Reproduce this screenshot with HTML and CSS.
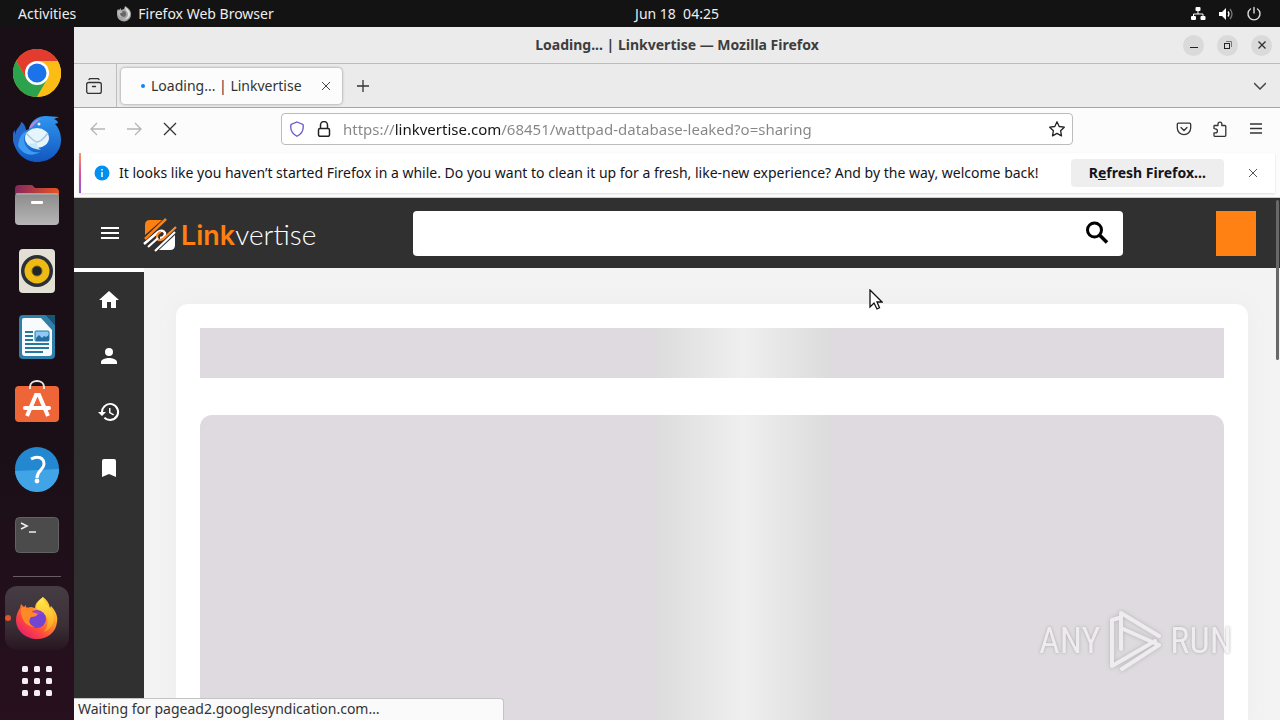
FILE: index.html
```html
<!DOCTYPE html>
<html lang="en">
<head>
<meta charset="utf-8">
<meta name="viewport" content="width=device-width, initial-scale=1">
<title>Loading... | Linkvertise</title>
<link rel="stylesheet" href="styles.css">
</head>
<body>
<div class="desktop">
  <header class="topbar">
    <div class="topbar-left">
      <button class="top-btn activities">Activities</button>
      <button class="top-btn app-menu">
        <svg width="16" height="16" viewBox="0 0 16 16"><path d="M1 5l1-2 1 1 2-2v2l3-1 1-3c3 2 6 4 6 8a7 7 0 0 1-14 1z" fill="#a5a5a5"/><path d="M9 1c3 2 5 4 5 7 0 4-4 6-7 5 3 0 5-2 5-5 0-2-3-4-3-7z" fill="#e4e4e4"/><circle cx="7" cy="8" r="3" fill="#666"/><path d="M2 5c2-1 3 0 5 1-1 1-2 1-3 1 0 3 2 4 4 4-4 1-6-2-6-6z" fill="#bbb"/></svg>
        <span>Firefox Web Browser</span>
      </button>
    </div>
    <button class="top-btn clock">Jun 18&nbsp; 04:25</button>
    <button class="top-btn tray" aria-label="System menu">
      <svg width="16" height="16" viewBox="0 0 16 16" fill="#fff"><rect x="5.500" y="1" width="5" height="4" rx="1"/><rect x="1" y="10" width="5" height="4" rx="1"/><rect x="10.500" y="10" width="5" height="4" rx="1"/><path d="M8 4v4M3.500 10V8h9.500v2" fill="none" stroke="#fff"/></svg>
      <svg width="16" height="16" viewBox="0 0 16 16"><path d="M1 6h3l4-4v12l-4-4H1z" fill="#fff"/><path d="M10 5.500q2 2.500 0 5" fill="none" stroke="#fff" stroke-width="1.300"/><path d="M12 3q4 5 0 10" fill="none" stroke="#777" stroke-width="1.300"/></svg>
      <svg width="16" height="16" viewBox="0 0 16 16" fill="none" stroke="#ddd" stroke-width="1.400" stroke-linecap="round"><path d="M8 1.500v5.500M4.500 3a6 6 0 1 0 7 0"/></svg>
    </button>
  </header>

  <nav class="dock" aria-label="Applications">
    <button class="dock-item" aria-label="Chrome">
      <svg width="48" height="48" viewBox="0 0 48 48"><circle cx="24" cy="24" r="24" fill="#fbbc15"/><path d="M3.200 12A24 24 0 0 1 44.800 12H24L13.600 30z" fill="#e33b2e"/><path d="M3.200 12A24 24 0 0 0 24 48L34.400 30 24 24 13.600 30z" fill="#2ba24c"/><path d="M24 12h20.800A24 24 0 0 1 24 48l10.400-18z" fill="#fbbc15"/><circle cx="24" cy="24" r="12" fill="#fff"/><circle cx="24" cy="24" r="9.500" fill="#1a73e8"/></svg>
    </button>
    <button class="dock-item" aria-label="Thunderbird">
      <svg width="48" height="48" viewBox="0 0 48 48"><defs><linearGradient id="tb" x2="0" y2="1"><stop stop-color="#2f96ee"/><stop offset="1" stop-color="#1257c0"/></linearGradient></defs><path d="M8 7c3 1 5 5 5 9L8 25 4 35C-2 26-1 18 2 15v5C3 13 8 11 8 7z" fill="#2568c9"/><path d="M16 14C18 5 25 1 33 1l13 1-5 2c3 1 4 3 4 4l-3 1c4 4 6 10 6 16 0 13-11 22-24 22C12 47 2 38 1 26c2 4 4 5 5 5-1-9 3-15 10-17z" fill="url(#tb)"/><path d="M16 14c2-7 7-10 13-10-6 2-7 6-11 9z" fill="#b488db"/><path d="M5 31c1-9 4-13 9-14-4 4-4 9-1 14 4 6 9 7 14 6-10 6-18 1-22-6z" fill="#3d9cf2"/><ellipse cx="24" cy="23" rx="12" ry="10" fill="#e6f4fc"/><path d="M13 18c4 4 8 9 11 9s8-5 11-9" fill="none" stroke="#a6c9db" stroke-width="1.500"/><path d="M14 29c4 4 8 5 14 6-4-3-4-5-4-7z" fill="#c7e7fb"/><circle cx="26" cy="9" r="1.500" fill="#e6f4fc"/></svg>
    </button>
    <button class="dock-item" aria-label="Files">
      <svg width="48" height="48" viewBox="0 0 48 48"><defs><linearGradient id="fb"><stop stop-color="#85275f"/><stop offset="1" stop-color="#e95420"/></linearGradient><linearGradient id="ff" x2="0" y2="1"><stop stop-color="#8b8b8b"/><stop offset="1" stop-color="#b6b6b6"/></linearGradient></defs><path d="M2 18V8q0-4 4-4h12q2 0 3 2l1 1h20q4 0 4 4v8z" fill="url(#fb)"/><rect x="2" y="12" width="44" height="32" rx="4" fill="url(#ff)"/><path d="M3 13h42" stroke="#b8b8b8"/><rect x="18" y="20" width="12" height="3" rx="1" fill="#fff"/></svg>
    </button>
    <button class="dock-item" aria-label="Rhythmbox">
      <svg width="48" height="48" viewBox="0 0 48 48"><rect x="6" y="2" width="36" height="44" rx="4" fill="#e2dfd4"/><circle cx="24" cy="24" r="16" fill="#2b3037"/><circle cx="24" cy="24" r="12.500" fill="#edbb14"/><circle cx="24" cy="24" r="5" fill="#20242e" stroke="#776017"/></svg>
    </button>
    <button class="dock-item" aria-label="LibreOffice Writer">
      <svg width="48" height="48" viewBox="0 0 48 48"><path d="M10 2h23l9 10v30q0 4-4 4H10q-4 0-4-4V6q0-4 4-4z" fill="#307fa8"/><path d="M33 2h9v10z" fill="#165778"/><path d="M11 5h17l11 12v23q0 3-3 3H12q-3 0-3-3V7q0-2 2-2z" fill="#f7fbfe"/><path d="M12 19h8M12 23h8M12 27h8M12 31h24M12 35h24M12 39h18" stroke="#28789e" stroke-width="2"/><rect x="22" y="18" width="14" height="10" rx="1" fill="#8fc9f4" stroke="#28789e"/><path d="M23 28v-3l3-3 3 3 2-2 2 1 3-2v6z" fill="#246fa1"/></svg>
    </button>
    <button class="dock-item" aria-label="Software">
      <svg width="48" height="48" viewBox="0 0 48 48"><rect x="2" y="7" width="44" height="36" rx="4" fill="#ee6637"/><path d="M17 10V8c0-8 14-8 14 0v2" fill="none" stroke="#eee6dc" stroke-width="2"/><path d="M14 37l9-21h3l9 21" fill="none" stroke="#fff" stroke-width="4"/><rect x="10" y="27" width="28" height="4" rx="2" fill="#fff"/></svg>
    </button>
    <button class="dock-item" aria-label="Help">
      <svg width="48" height="48" viewBox="0 0 48 48"><circle cx="24" cy="24" r="22" fill="#2488d1"/><path d="M2 26a22 22 0 0 0 44-2z" fill="#40a4e7"/><path d="M18 14c7-4 13-1 13 5 0 6-7 6-7 14" fill="none" stroke="#fff" stroke-width="3"/><circle cx="24" cy="36" r="2.400" fill="#fff"/></svg>
    </button>
    <button class="dock-item" aria-label="Terminal">
      <svg width="48" height="48" viewBox="0 0 48 48"><rect x="2.500" y="6.500" width="43" height="35" rx="4" fill="#4b4b4b" stroke="#626262"/><path d="M8 12l6 3-6 3M16 21h7" fill="none" stroke="#eee" stroke-width="1.600"/></svg>
    </button>
    <hr class="dock-rule">
    <button class="dock-item dock-active" aria-label="Firefox">
      <svg width="44" height="44" viewBox="0 0 44 44"><defs><linearGradient id="fx" x1="1" y1="0" x2="0.200" y2="1"><stop stop-color="#fff44f"/><stop offset="0.400" stop-color="#ff9b29"/><stop offset="0.700" stop-color="#ff4b3d"/><stop offset="1" stop-color="#e51b6e"/></linearGradient><linearGradient id="fy" x2="0" y2="1"><stop stop-color="#fff04a"/><stop offset="1" stop-color="#ff9b1f"/></linearGradient></defs><path d="M28 1c4 3 6 6 7 11l1-2c5 5 7 11 6 16-1 10-9 17-20 17S1 35 1 24c0-5 2-9 4-12l1-4 3 3 2-2v3l5-1 4 1c0-5 4-8 8-11z" fill="url(#fx)"/><path d="M28 1c0 7 11 11 11 21 0 7-5 12-10 14 7-9 3-19-4-20l-4-4c0-5 4-8 7-11z" fill="url(#fy)"/><circle cx="22" cy="23" r="9" fill="#7444d2"/><path d="M14 18c5-5 11-3 14 0-4-1-7 1-9 3z" fill="#b33ace"/><path d="M6 12c5-2 9 0 11 4l6 2c-1 2-4 3-7 3-4 5 0 9 4 10-9 0-15-8-14-19z" fill="#ff8a25"/></svg>
    </button>
    <button class="dock-item dock-apps" aria-label="Show Applications">
      <svg width="30" height="30" viewBox="0 0 30 30" fill="#f6eef4"><rect width="6" height="6" rx="1.500"/><rect x="12" width="6" height="6" rx="1.500"/><rect x="24" width="6" height="6" rx="1.500"/><rect y="12" width="6" height="6" rx="1.500"/><rect x="12" y="12" width="6" height="6" rx="1.500"/><rect x="24" y="12" width="6" height="6" rx="1.500"/><rect y="24" width="6" height="6" rx="1.500"/><rect x="12" y="24" width="6" height="6" rx="1.500"/><rect x="24" y="24" width="6" height="6" rx="1.500"/></svg>
    </button>
  </nav>

  <section class="window">
    <div class="titlebar">
      <span class="window-title">Loading... | Linkvertise — Mozilla Firefox</span>
      <div class="window-controls">
        <button class="round-btn" aria-label="Minimize"><svg width="10" height="10" viewBox="0 0 10 10"><path d="M1 7.500h8" stroke="#222"/></svg></button>
        <button class="round-btn" aria-label="Restore"><svg width="10" height="10" viewBox="0 0 10 10" fill="none" stroke="#222"><rect x="1.500" y="3.500" width="5" height="5"/><path d="M3 1.500h5.500V7" stroke="#777"/></svg></button>
        <button class="round-btn" aria-label="Close"><svg width="10" height="10" viewBox="0 0 10 10"><path d="M1.500 1.500l7 7M8.500 1.500l-7 7" stroke="#333" stroke-width="1.400"/></svg></button>
      </div>
    </div>

    <div class="tabbar">
      <button class="view-btn" aria-label="Firefox View"><svg width="16" height="16" viewBox="0 0 16 16" fill="none" stroke="#333" stroke-width="1.300" stroke-linecap="round"><rect x=".7" y="4.500" width="14.600" height="11" rx="2"/><path d="M3 1.500q.5-1 1.500-1h7q1 0 1.500 1M6.500 8.500h3"/></svg></button>
      <div class="tab">
        <span class="tab-dot"></span>
        <span class="tab-label">Loading... | Linkvertise</span>
        <button class="icon-btn" aria-label="Close tab"><svg width="10" height="10" viewBox="0 0 10 10"><path d="M1 1l8 8M9 1l-8 8" stroke="#444"/></svg></button>
      </div>
      <button class="icon-btn new-tab" aria-label="New tab"><svg width="12" height="12" viewBox="0 0 12 12"><path d="M6 0v12M0 6h12" stroke="#333" stroke-width="1.300"/></svg></button>
      <button class="icon-btn all-tabs" aria-label="List all tabs"><svg width="12" height="12" viewBox="0 0 12 12"><path d="M0 3l6 6 6-6" fill="none" stroke="#444" stroke-width="1.500"/></svg></button>
    </div>

    <div class="navbar">
      <div class="nav-left">
        <button class="icon-btn" aria-label="Back"><svg width="16" height="16" viewBox="0 0 16 16" fill="none" stroke="#b5b5b6" stroke-width="1.300"><path d="M15 8H1.500M7 2L1 8l6 6"/></svg></button>
        <button class="icon-btn" aria-label="Forward"><svg width="16" height="16" viewBox="0 0 16 16" fill="none" stroke="#b5b5b6" stroke-width="1.300"><path d="M1 8h13.500M9 2l6 6-6 6"/></svg></button>
        <button class="icon-btn" aria-label="Stop"><svg width="16" height="16" viewBox="0 0 16 16"><path d="M2 2l12 12M14 2L2 14" stroke="#333" stroke-width="1.300"/></svg></button>
      </div>
      <div class="urlbar">
        <svg width="16" height="16" viewBox="0 0 16 16" fill="none" stroke="#6b57c8" stroke-width="1.300"><path d="M8 1l6 2.500c1 5-1 9-6 11.800C3 12.500 1 8.500 2 3.500z"/></svg>
        <svg width="16" height="16" viewBox="0 0 16 16" fill="none" stroke="#222" stroke-width="1.500"><rect x="2.500" y="7.500" width="11" height="7.800" rx="1.500"/><path d="M4.500 7.500V4a3.500 3.500 0 0 1 7 0v3.500"/></svg>
        <input class="url-input" type="text" aria-label="Address" value="https://linkvertise.com/68451/wattpad-database-leaked?o=sharing">
        <button class="icon-btn" aria-label="Bookmark this page"><svg width="16" height="16" viewBox="0 0 16 16" fill="none" stroke="#222" stroke-width="1.300" stroke-linejoin="round"><path d="M8 .8l2.200 4.700 5.100.7-3.700 3.500.9 5.200L8 12.400l-4.500 2.500.9-5.200L.7 6.200l5.100-.7z"/></svg></button>
      </div>
      <div class="nav-right">
        <button class="icon-btn" aria-label="Pocket"><svg width="16" height="16" viewBox="0 0 16 16" fill="none" stroke="#333" stroke-width="1.300" stroke-linecap="round"><path d="M2.500 2.200h11q1.200 0 1.200 1.200V7a6.700 6.700 0 0 1-13.400 0V3.400q0-1.200 1.200-1.200zM5 6.500l3 3 3-3"/></svg></button>
        <button class="icon-btn" aria-label="Extensions"><svg width="16" height="16" viewBox="0 0 16 16" fill="none" stroke="#333" stroke-width="1.300" stroke-linejoin="round"><path d="M2 7.500V5.200q0-.7.7-.7H6V3a1.900 1.900 0 0 1 3.800 0v1.500h3q1 0 1 1v8.800q0 1-1 1H2.700q-.7 0-.7-.7v-2.800h1.500a1.900 1.900 0 0 0 0-3.800z"/></svg></button>
        <button class="icon-btn" aria-label="Application menu"><svg width="16" height="16" viewBox="0 0 16 16"><path d="M2 3h12M2 7.500h12M2 12h12" stroke="#333" stroke-width="1.300"/></svg></button>
      </div>
    </div>

    <div class="notice-wrap">
      <div class="notice">
        <svg class="info" width="16" height="16" viewBox="0 0 16 16"><circle cx="8" cy="8" r="7.500" fill="#0090ed"/><path d="M8 7v5M8 4v1.500" stroke="#fff" stroke-width="1.500"/></svg>
        <span class="notice-text">It looks like you haven’t started Firefox in a while. Do you want to clean it up for a fresh, like-new experience? And by the way, welcome back!</span>
        <button class="refresh">R<u>e</u>fresh Firefox…</button>
        <button class="icon-btn notice-close" aria-label="Dismiss"><svg width="10" height="10" viewBox="0 0 10 10"><path d="M1 1l8 8M9 1l-8 8" stroke="#555"/></svg></button>
      </div>
    </div>

    <div class="page">
      <header class="site-header">
        <button class="icon-btn menu-btn" aria-label="Menu"><svg width="18" height="12" viewBox="0 0 18 12"><path d="M0 1h18M0 6h18M0 11h18" stroke="#fff" stroke-width="2"/></svg></button>
        <a class="brand" href="#">
          <svg width="34" height="34" viewBox="0 0 34 34"><path d="M2 17V7q0-5 5-5h12z" fill="#ff7f11"/><path d="M32 17v10q0 5-5 5H16z" fill="#fff"/><path d="M2 21L23 1" stroke="#ff7f11" stroke-width="2.500"/><path d="M1 26l14-12q5-3 7 1 0 5-5 5" fill="none" stroke="#fff" stroke-width="2.500"/><path d="M33 9L20 21q-6 3-6-2 0-4 4-5" fill="none" stroke="#ff8a2a" stroke-width="2.200"/><path d="M5 29l10-9M12 33l20-19" stroke="#fff" stroke-width="2.200"/></svg>
          <span class="brand-name"><b>Link</b>vertise</span>
        </a>
        <form class="search">
          <input class="search-input" type="search" aria-label="Search">
          <button type="button" class="icon-btn" aria-label="Search"><svg width="24" height="24" viewBox="0 0 24 24" fill="none" stroke="#000"><circle cx="9.500" cy="9" r="7" stroke-width="3"/><path d="M14.500 14l7.500 7.500" stroke-width="3.500"/></svg></button>
        </form>
        <button class="account" aria-label="Account"></button>
      </header>
      <div class="site-body">
        <nav class="sidebar" aria-label="Site">
          <a href="#" aria-label="Home"><svg width="24" height="24" viewBox="0 0 24 24" fill="#fff"><path d="M10 20v-6h4v6h5v-8h3L12 3 2 12h3v8z"/></svg></a>
          <a href="#" aria-label="Profile"><svg width="24" height="24" viewBox="0 0 24 24" fill="#fff"><path d="M12 12a4 4 0 1 0 0-8 4 4 0 0 0 0 8zm0 2c-2.700 0-8 1.300-8 4v2h16v-2c0-2.700-5.300-4-8-4z"/></svg></a>
          <a href="#" aria-label="History"><svg width="24" height="24" viewBox="0 0 24 24" fill="#fff"><path d="M13 3a9 9 0 0 0-9 9H1l3.900 3.900.1.100L9 12H6a7 7 0 1 1 2.100 4.900l-1.400 1.400A9 9 0 1 0 13 3zm-1 5v5l4.300 2.500.7-1.200-3.500-2.100V8z"/></svg></a>
          <a href="#" aria-label="Bookmarks"><svg width="24" height="24" viewBox="0 0 24 24" fill="#fff"><path d="M17 3H7a2 2 0 0 0-2 2v16l7-3 7 3V5a2 2 0 0 0-2-2z"/></svg></a>
        </nav>
        <main class="content">
          <article class="card" aria-busy="true">
            <div class="skeleton skeleton-title"></div>
            <div class="skeleton skeleton-body"></div>
          </article>
        </main>
      </div>
      <div class="scroll-thumb"></div>
      <div class="status">Waiting for pagead2.googlesyndication.com…</div>
    </div>
  </section>

  <div class="watermark">
    <span>ANY</span>
    <svg width="58" height="64" viewBox="0 0 58 64" fill="none" stroke="#f3f1f3" stroke-width="4" stroke-linejoin="round" stroke-linecap="round"><path d="M15 40V4l38 23"/><path d="M13 9l-7 2v46l43-25"/><path d="M15 19l38 17-37 24"/></svg>
    <span>RUN</span>
  </div>
  <svg class="pointer" width="14" height="22" viewBox="0 0 14 22"><path d="M1 1v17l4-4 3 6 2.500-1.200L8 13h5z" fill="#fff" stroke="#111" stroke-width="1.300"/></svg>
</div>
</body>
</html>
```
FILE: styles.css
```css
* { box-sizing: border-box; }

body {
  margin: 0;
  font-family: "Noto Sans", "Open Sans", sans-serif;
  font-size: 14px;
  line-height: 20px;
  color: #333;
}

button {
  font: inherit;
  color: inherit;
  border: 0;
  padding: 0;
  background: none;
}

svg { display: block; flex: none; }

.desktop {
  position: relative;
  display: grid;
  grid-template: auto minmax(0, 1fr) / 74px minmax(0, 1fr);
  height: 100vh;
  overflow: hidden;
}

/* Top panel */
.topbar {
  grid-column: 1 / -1;
  display: grid;
  grid-template-columns: 1fr auto 1fr;
  align-items: center;
  height: 27px;
  padding: 0 18px;
  background: #131313;
  color: #eee;
}
.topbar-left { display: flex; gap: 40px; }
.top-btn { display: flex; align-items: center; gap: 6px; white-space: nowrap; }
.clock { padding-left: 74px; }
.tray { justify-self: end; gap: 12px; }

/* Dock */
.dock {
  display: flex;
  flex-direction: column;
  align-items: center;
  padding-top: 13px;
  background: linear-gradient(#1a0f17 60%, #28101e);
}
.dock-item {
  display: grid;
  place-items: center;
  flex: none;
  width: 64px;
  height: 66px;
}
.dock-rule {
  width: 48px;
  margin: 8px 0 9px;
  border: 0;
  border-top: 1px solid #675d65;
}
.dock-active {
  position: relative;
  height: 64px;
  border-radius: 12px;
  background: linear-gradient(#463c43, #3c3038 60%, #28151f);
}
.dock-active::before {
  content: "";
  position: absolute;
  left: 0;
  top: 29px;
  width: 6px;
  height: 6px;
  border-radius: 50%;
  background: #e2552a;
}
.dock-apps { height: 62px; }

/* Browser window */
.window { display: flex; flex-direction: column; min-width: 0; }

.titlebar {
  display: grid;
  grid-template-columns: 1fr auto 1fr;
  align-items: center;
  height: 37px;
  padding: 0 8px;
  background: #ebebeb;
  border-bottom: 1px solid #bdbdbd;
}
.window-title { grid-column: 2; font-weight: 700; color: #3d3d3d; }
.window-controls { display: flex; justify-self: end; gap: 13px; }
.round-btn {
  display: grid;
  place-items: center;
  width: 21px;
  height: 21px;
  border-radius: 50%;
  background: #dadada;
}

.icon-btn { display: grid; place-items: center; flex: none; }

.tabbar {
  display: flex;
  align-items: center;
  height: 44px;
  padding-right: 14px;
  background: #ebebeb;
  border-bottom: 1px solid #a6a6a6;
}
.view-btn {
  display: grid;
  place-items: center;
  align-self: stretch;
  width: 43px;
  padding-right: 3px;
  border-right: 1px solid #bdbdbd;
}
.tab {
  display: flex;
  align-items: center;
  gap: 6px;
  width: 221px;
  height: 36px;
  margin-left: 4px;
  padding: 0 11px 0 20px;
  border-radius: 4px;
  background: #fcfcfc;
  box-shadow: 0 0 3px #888;
}
.tab-dot { width: 4px; height: 4px; border-radius: 50%; background: #0a84ff; }
.tab-label { flex: 1; white-space: nowrap; }
.new-tab { margin-left: 15px; }
.all-tabs { margin-left: auto; }

.navbar {
  display: grid;
  grid-template-columns: 207px minmax(0, 792px) 1fr;
  align-items: center;
  height: 41px;
  background: #fcfcfc;
}
.nav-left { display: flex; gap: 20px; padding-left: 16px; }
.nav-right { display: flex; justify-content: flex-end; gap: 20px; padding-right: 16px; }
.urlbar {
  display: flex;
  align-items: center;
  gap: 11px;
  height: 32px;
  padding: 0 7px;
  border: 1px solid #bbbbc0;
  border-radius: 4px;
  background: #fff;
}
.url-input {
  flex: 1;
  min-width: 0;
  border: 0;
  padding: 0;
  outline: 0;
  font: inherit;
  font-size: 15px;
  color: transparent;
  background: linear-gradient(90deg, #858585 52px, #151515 52px 158px, #858585 158px);
  background-clip: text;
}

.notice-wrap {
  padding: 4px 5px;
  background: #fcfcfc;
  border-bottom: 1px solid #ccc;
}
.notice {
  display: flex;
  align-items: center;
  height: 40px;
  padding: 0 17px 0 13px;
  border-left: 2px solid;
  border-image: linear-gradient(#ff9a5c, #d5519d, #9059d8) 1;
  background: #fff;
  box-shadow: 0 1px 2px #ddd;
}
.notice-text {
  flex: 1;
  min-width: 0;
  margin-left: 9px;
  color: #15141a;
  white-space: nowrap;
}
.refresh {
  height: 28px;
  padding: 0 18px;
  border-radius: 4px;
  background: #eee;
  color: #15141a;
  font-weight: 700;
  white-space: nowrap;
}
.notice-close { margin-left: 24px; }

/* Web page */
.page {
  position: relative;
  flex: 1;
  min-height: 0;
  display: flex;
  flex-direction: column;
  background: #fff;
}
.site-header {
  display: flex;
  align-items: center;
  flex: none;
  height: 70px;
  padding: 0 24px 0 27px;
  background: #303030;
}
.brand {
  display: flex;
  align-items: center;
  gap: 4px;
  width: 270px;
  margin-left: 24px;
  padding-top: 4px;
  color: #fff;
  text-decoration: none;
}
.brand-name {
  font-family: Lato, "Open Sans", sans-serif;
  font-size: 28px;
  line-height: 32px;
  font-weight: 300;
}
.brand-name b { font-family: Inter, "Open Sans", sans-serif; font-size: 27px; font-weight: 600; color: #ff7f11; }
.search {
  display: flex;
  align-items: center;
  flex: 0 1 710px;
  height: 45px;
  padding-right: 14px;
  border-radius: 4px;
  background: #fff;
}
.search-input {
  flex: 1;
  min-width: 0;
  height: 100%;
  border: 0;
  padding: 0 14px;
  background: none;
  font: inherit;
  outline: 0;
}
.account { width: 40px; height: 45px; margin-left: auto; background: #ff8113; }

.site-body { flex: 1; min-height: 0; display: flex; }
.sidebar {
  display: flex;
  flex-direction: column;
  align-items: center;
  gap: 32px;
  width: 70px;
  margin-top: 4px;
  padding-top: 16px;
  background: #303030;
}
.content {
  flex: 1;
  min-width: 0;
  display: flex;
  padding: 36px 32px 0;
  overflow: hidden;
  background: #f3f3f3;
}
.card {
  flex: 1;
  display: flex;
  flex-direction: column;
  gap: 37px;
  padding: 24px 24px 0;
  border-radius: 12px 12px 0 0;
  background: #fff;
  box-shadow: 0 0 20px #ececec;
}
.skeleton {
  background: linear-gradient(90deg, #dedadf 44%, #dddddd 45%, #efefef 53%, #dddddd 61%, #dedadf 62%);
}
.skeleton-title { height: 50px; }
.skeleton-body { flex: 1; border-radius: 12px 12px 0 0; }

.scroll-thumb {
  position: absolute;
  top: 2px;
  right: 1px;
  width: 3px;
  height: 160px;
  border-radius: 2px;
  background: #686868;
}
.status {
  position: absolute;
  left: 0;
  bottom: 0;
  width: 430px;
  height: 22px;
  padding-left: 4px;
  border: solid #c4c4c4;
  border-width: 1px 1px 0 0;
  border-radius: 0 4px 0 0;
  background: #fafafa;
}

/* Overlays */
.watermark {
  position: absolute;
  right: 48px;
  bottom: 47px;
  display: flex;
  align-items: center;
  gap: 6px;
  font-family: "Roboto Condensed", "Liberation Sans Narrow", "Liberation Sans", sans-serif;
  font-size: 36px;
  line-height: 64px;
  color: #f3f1f3;
  text-shadow: 0 0 3px #999;
  opacity: 0.8;
  pointer-events: none;
}
.watermark svg { filter: drop-shadow(0 0 2px #aaa); }
.pointer { position: absolute; left: 869px; top: 289px; pointer-events: none; }
```
